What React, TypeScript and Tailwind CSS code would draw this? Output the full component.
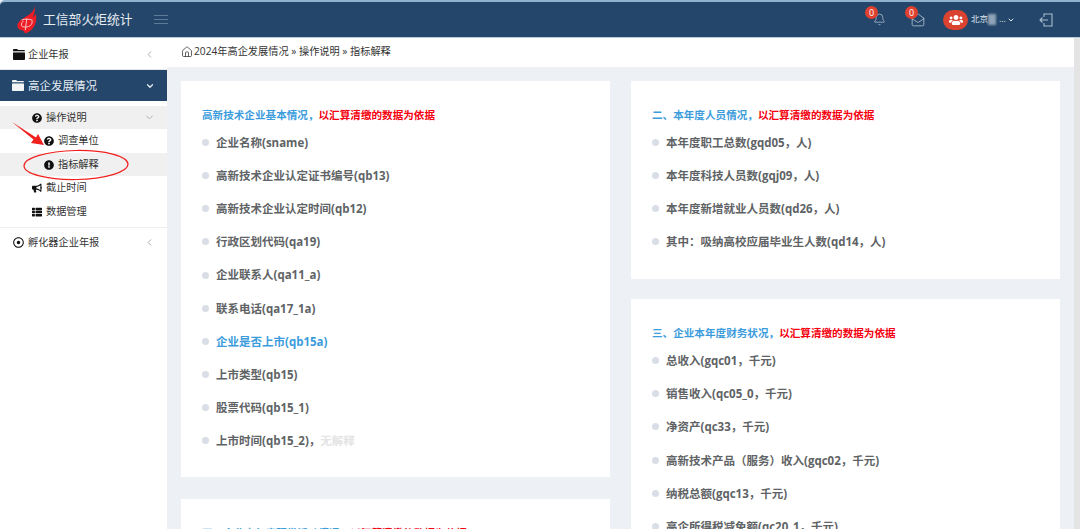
import React from 'react';
import { Home, Bell, MailOpen, ChevronLeft, ChevronDown } from 'lucide-react';
import { FaQuestionCircle, FaExclamationCircle, FaBullhorn, FaThList, FaRegDotCircle, FaUsers } from 'react-icons/fa';

interface Item {
  text: string;
  link?: boolean;
  note?: string;
}

const basicItems: Item[] = [
  { text: '企业名称(sname)' },
  { text: '高新技术企业认定证书编号(qb13)' },
  { text: '高新技术企业认定时间(qb12)' },
  { text: '行政区划代码(qa19)' },
  { text: '企业联系人(qa11_a)' },
  { text: '联系电话(qa17_1a)' },
  { text: '企业是否上市(qb15a)', link: true },
  { text: '上市类型(qb15)' },
  { text: '股票代码(qb15_1)' },
  { text: '上市时间(qb15_2)，', note: '无解释' },
];

const staffItems: Item[] = [
  { text: '本年度职工总数(gqd05，人)' },
  { text: '本年度科技人员数(gqj09，人)' },
  { text: '本年度新增就业人员数(qd26，人)' },
  { text: '其中：吸纳高校应届毕业生人数(qd14，人)' },
];

const financeItems: Item[] = [
  { text: '总收入(gqc01，千元)' },
  { text: '销售收入(qc05_0，千元)' },
  { text: '净资产(qc33，千元)' },
  { text: '高新技术产品（服务）收入(gqc02，千元)' },
  { text: '纳税总额(gqc13，千元)' },
  { text: '高企所得税减免额(qc20_1，千元)' },
];

const SectionCard: React.FC<{ title: string; items?: Item[]; className: string; listClass?: string }> = ({ title, items = [], className, listClass = 'mt-[3.700px]' }) => (
  <div className={`bg-white pl-[21px] pt-[27px] ${className}`}>
    <h3 className="text-[10.6px] leading-[14px] font-bold text-[#3c9cdc]">
      {title}，<span className="text-[#f5000f]">以汇算清缴的数据为依据</span>
    </h3>
    <ul className={listClass}>
      {items.map((item) => (
        <li key={item.text} className="flex items-center h-[33.2px] text-[11.5px] font-bold text-[#606365]">
          <span className="w-[7px] h-[7px] rounded-full bg-[#d9dee6] mr-[7px]" />
          <span className={item.link ? 'text-[#3c9cdc]' : ''}>{item.text}</span>
          {item.note && <span className="text-[#e4e4e4]">{item.note}</span>}
        </li>
      ))}
    </ul>
  </div>
);

const NavRow: React.FC<{ icon: React.ReactNode; label: string; className?: string; indent: string; arrow?: React.ReactNode }> = ({ icon, label, className = '', indent, arrow }) => (
  <div className={`flex items-center text-[10.2px] text-[#333] ${indent} ${className}`}>
    <span className="w-[13px] flex justify-center mr-[3px] text-[#111]">{icon}</span>
    <span>{label}</span>
    {arrow && <span className="ml-auto mr-[12px]">{arrow}</span>}
  </div>
);

const Logo = () => (
  <svg width="21" height="29" viewBox="0 0 21 29">
    <path d="M17 0c1 4-1 6.500-4 9C8 12.500 2 15 .5 19.500c-.7 2.800 1 5 3.500 5.500 1.700 .3 3 .8 4 3.500 3.500-1 7-3.500 9-7 2.300-4 2.600-8 2-12.500-1 1.300-2 2.300-3.200 3.200C18 7.500 18.500 4 17 0z" fill="#ee1c25" />
    <path d="M4.500 15c3.500-1.200 7.500-1.200 11 .2M9.800 13.500L8.300 25M6.500 16c-2.200 1.800-2.800 4.300-1.300 5.500 2 1 6 .8 8-.8 1.800-1.500 2.300-3.500 1.700-5.200" stroke="#fbc4c4" strokeWidth="1" fill="none" />
  </svg>
);

const FolderIcon: React.FC<{ fill: string; line: string }> = ({ fill, line }) => (
  <svg width="12" height="11" viewBox="0 0 12 11">
    <path d="M0 2.500V1.200C0 .5 .5 0 1.200 0h2.600c.6 0 1 .5 1.200 1h5.800c.7 0 1.200 .5 1.200 1.200v.3z" fill={fill} />
    <rect x="0" y="3.200" width="12" height="7.800" rx=".8" fill={fill} />
    <path d="M0 2.850h12" stroke={line} strokeWidth=".7" />
  </svg>
);

const Badge: React.FC<{ className: string }> = ({ className }) => (
  <span className={`absolute -top-[7px] w-[13px] h-[13px] rounded-full bg-[#e0402f] text-white text-[9px] leading-[13px] text-center ${className}`}>0</span>
);

const App: React.FC = () => {
  return (
    <div className="w-[1080px] h-[529px] overflow-hidden bg-[#edf0f5] font-['Open_Sans','Noto_Sans_CJK_SC',sans-serif]">
      <header className="h-[38px] rounded-tl-[5px] bg-[#24466a] border-t-2 border-t-[#8fb3cf] border-b border-b-[#b9cbdb] flex items-center text-white">
        <div className="w-[17px]" />
        <Logo />
        <span className="ml-[5px] text-[12.8px] text-[#e6edf3]">工信部火炬统计</span>
        <div className="ml-[21px] w-[14px] flex flex-col gap-[3px]">
          <span className="h-px bg-[#5d7a96]" />
          <span className="h-px bg-[#5d7a96]" />
          <span className="h-px bg-[#5d7a96]" />
        </div>
        <div className="ml-auto flex items-center">
          <span className="relative mr-[25px]"><Bell size={13} strokeWidth={1.3} className="text-[#bccbd9]" /><Badge className="-left-[8px]" /></span>
          <span className="relative mr-[18px]"><MailOpen size={14} strokeWidth={1.3} className="text-[#bccbd9]" /><Badge className="-left-[6px]" /></span>
          <span className="w-[25px] h-[20px] rounded-full bg-[#d9432f] flex items-center justify-center mr-[3px]"><FaUsers size={14} /></span>
          <span className="w-[36px] flex items-center text-[8.500px] text-[#dfe7ee] whitespace-nowrap">
            北京<span className="w-[8px] h-[11px] bg-[#8ea3b8] blur-[1px]" /><span className="ml-[3px]">...</span>
          </span>
          <ChevronDown size={8} strokeWidth={3} className="text-[#dfe7ee]" />
          <svg className="ml-[24px] mr-[27px] text-[#a9bccd]" width="14" height="14" viewBox="0 0 14 14" fill="none" stroke="currentColor" strokeWidth="1.100">
            <path d="M5 4V1h8v12H5v-3M9 7H1M3.500 4.500L1 7l2.500 2.500" />
          </svg>
        </div>
      </header>

      <div className="flex h-[491px]">
        <aside className="w-[167px] shrink-0 bg-white">
          <NavRow icon={<FolderIcon fill="#111" line="#fff" />} label="企业年报" indent="pl-[12px]" className="h-[32px] pt-[2px] border-b border-[#e7e7e7]"
            arrow={<ChevronLeft size={11} className="text-[#a7a7a7]" />} />
          <div className="h-[31px] bg-[#24466a] flex items-center pl-[12px] text-[11.500px] text-[#e6edf3]">
            <FolderIcon fill="#f2f4f6" line="#24466a" />
            <span className="ml-[4px]">高企发展情况</span>
            <ChevronDown size={10} strokeWidth={3} className="ml-auto mr-[12px]" />
          </div>
          <div className="h-[5px]" />
          <NavRow icon={<FaQuestionCircle size={10} />} label="操作说明" indent="pl-[30px]" className="h-[23px] bg-[#f0f0f0]"
            arrow={<ChevronDown size={11} className="text-[#a7a7a7]" />} />
          <NavRow icon={<FaQuestionCircle size={10} />} label="调查单位" indent="pl-[42px]" className="h-[24px]" />
          <NavRow icon={<FaExclamationCircle size={10} />} label="指标解释" indent="pl-[42px]" className="h-[23px] bg-[#f0f0f0]" />
          <NavRow icon={<FaBullhorn size={10} />} label="截止时间" indent="pl-[30px]" className="h-[24px]" />
          <NavRow icon={<FaThList size={10} />} label="数据管理" indent="pl-[30px]" className="h-[24px]" />
          <div className="h-[4px] border-b border-[#eeeeee]" />
          <NavRow icon={<FaRegDotCircle size={11} />} label="孵化器企业年报" indent="pl-[12px]" className="h-[29px]"
            arrow={<ChevronLeft size={11} className="text-[#a7a7a7]" />} />
        </aside>

        <main className="flex-1 min-w-0">
          <div className="h-[29px] bg-white flex items-center pl-[14px] pb-[2px] text-[10.200px] text-[#333]">
            <Home size={12} strokeWidth={1.5} className="mr-[1px]" />
            <span>2024年高企发展情况 » 操作说明 » 指标解释</span>
          </div>
          <div className="flex gap-[21px] pl-[14px] pt-[14px]">
            <div className="w-[429px] flex flex-col gap-[22px]">
              <SectionCard title="高新技术企业基本情况" items={basicItems} className="h-[396px]" />
              <SectionCard title="四、企业本年度研发活动情况" className="h-[100px]" />
            </div>
            <div className="w-[429px] flex flex-col gap-[20px]">
              <SectionCard title="二、本年度人员情况" items={staffItems} className="h-[198px]" />
              <SectionCard title="三、企业本年度财务状况" items={financeItems} className="h-[300px]" listClass="mt-[4px]" />
            </div>
          </div>
        </main>

        <div className="w-[6px] shrink-0 bg-[#e4e4e4]" />
      </div>

      {/* hand drawn annotation on top of the screenshot */}
      <svg className="absolute left-0 top-0 pointer-events-none" width="200" height="200" viewBox="0 0 200 200" fill="none">
        <path d="M12 122 L36 137.500 L38 134 L44 145 L31 143 L33.500 139.500 Z" fill="#f0201f" />
        <ellipse cx="76" cy="165" rx="52" ry="14.500" stroke="#f0201f" strokeWidth="1.200" transform="rotate(-1 76 165)" />
      </svg>
    </div>
  );
};

export default App;
